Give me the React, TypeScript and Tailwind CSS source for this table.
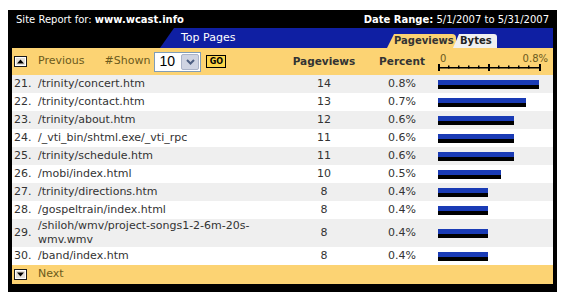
import React from 'react'

type Row = {n: number; path: string; views: number; pct: number}

const rows: Row[] = [
  {n: 21, path: '/trinity/concert.htm', views: 14, pct: 0.8},
  {n: 22, path: '/trinity/contact.htm', views: 13, pct: 0.7},
  {n: 23, path: '/trinity/about.htm', views: 12, pct: 0.6},
  {n: 24, path: '/_vti_bin/shtml.exe/_vti_rpc', views: 11, pct: 0.6},
  {n: 25, path: '/trinity/schedule.htm', views: 11, pct: 0.6},
  {n: 26, path: '/mobi/index.html', views: 10, pct: 0.5},
  {n: 27, path: '/trinity/directions.htm', views: 8, pct: 0.4},
  {n: 28, path: '/gospeltrain/index.html', views: 8, pct: 0.4},
  {n: 29, path: '/shiloh/wmv/project-songs1-2-6m-20s-wmv.wmv', views: 8, pct: 0.4},
  {n: 30, path: '/band/index.htm', views: 8, pct: 0.4},
]

const ArrowBox = ({up}: {up: boolean}) => (
  <svg width="13" height="11" viewBox="0 0 13 11">
    <rect x="0.5" y="0.5" width="12" height="10" fill="#e4e0d8" stroke="#1a1a1a" />
    <rect x="1.5" y="1.5" width="10" height="8" fill="none" stroke="#ffffff" />
    {up ? (
      <polygon points="3,7.5 10,7.5 6.5,3.5" fill="#000" />
    ) : (
      <polygon points="3,3.5 10,3.5 6.5,7.5" fill="#000" />
    )}
  </svg>
)

const Ruler = () => {
  const ticks = [10, 20, 30, 40, 60, 70, 80, 90]
  return (
    <svg width="103" height="7" viewBox="0 0 103 7">
      <rect x="0" y="3" width="103" height="1.5" fill="#000" />
      <rect x="0" y="0" width="2" height="7" fill="#000" />
      <rect x="50" y="0" width="2" height="7" fill="#000" />
      <rect x="101" y="0" width="2" height="7" fill="#000" />
      {ticks.map(t => (
        <rect key={t} x={t} y="1.5" width="1.5" height="3" fill="#000" />
      ))}
    </svg>
  )
}

export default function App() {
  return (
    <div className="w-[565px] h-[301px] bg-white pt-[10px] pl-[8px] font-['DejaVu_Sans',Verdana,sans-serif]">
      <div className="w-[549px] bg-black px-[4px] pb-[8px]">
        {/* title bar */}
        <div className="h-[18px] flex items-center justify-between px-[4px] text-[10px] text-white">
          <span>
            Site Report for: <b>www.wcast.info</b>
          </span>
          <span>
            <b>Date Range:</b> 5/1/2007 to 5/31/2007
          </span>
        </div>

        {/* tab bar */}
        <div className="h-[20px] flex">
          <div className="ml-[148px] flex-1 flex items-end bg-[#0f1fa3] [clip-path:polygon(14px_0,100%_0,100%_100%,0_100%)] rounded-tl-[6px]">
            <span className="self-center ml-[21px] text-[11px] text-white">Top Pages</span>
            <div className="ml-auto mr-[56px] flex items-end">
              <div className="h-[14px] w-[69px] pl-[7px] bg-[#fcd373] rounded-tr-[4px] text-[10px] font-bold text-[#333] leading-[14px] [clip-path:polygon(7px_0,100%_0,100%_100%,0_100%)]">
                Pageviews
              </div>
              <div className="relative -ml-[3px] h-[14px] w-[44px] pl-[7px] bg-[#f0f0f0] rounded-tr-[3px] text-[10px] font-bold text-[#222] leading-[14px] [clip-path:polygon(6px_0,100%_0,100%_100%,0_100%)]">
                Bytes
              </div>
            </div>
          </div>
        </div>

        {/* column header */}
        <div className="h-[27px] flex items-center bg-[#fcd373] text-[11px] text-[#6b5a1c]">
          <div className="w-[270px] flex items-center pl-[2px]">
            <ArrowBox up />
            <span className="ml-[11px]">Previous</span>
            <span className="ml-[20px]">#Shown</span>
            <div className="ml-[4px] w-[47px] h-[20px] bg-white border border-[#7f9db9] flex items-center">
              <span className="pl-[4px] w-[19px] text-[14px] text-black font-['Liberation_Sans',Arial,sans-serif]">10</span>
              <div className="ml-auto mr-[1px] w-[18px] h-[16px] bg-[#cfd4e2] border border-[#aab3c8] rounded-[2px] flex items-center justify-center">
                <svg width="9" height="6" viewBox="0 0 9 6">
                  <polyline points="1,1 4.5,4.5 8,1" fill="none" stroke="#4d5f82" strokeWidth="2" />
                </svg>
              </div>
            </div>
            <div className="ml-[5px] w-[20px] h-[13px] border border-black bg-[#fdd54a] flex items-center justify-center text-[8px] font-bold text-black leading-none">
              GO
            </div>
          </div>
          <div className="w-[84px] text-center font-bold text-[#333] text-[10.5px]">Pageviews</div>
          <div className="w-[72px] text-center font-bold text-[#333] text-[10.5px]">Percent</div>
          <div className="w-[113px] flex flex-col pt-[2px]">
            <div className="flex justify-between text-[10px] leading-[10px] pl-[2px] pr-[3px]">
              <span>0</span>
              <span>0.8%</span>
            </div>
            <Ruler />
          </div>
        </div>

        {/* rows */}
        {rows.map((r, i) => (
          <div
            key={r.n}
            className={`flex items-center text-[11px] text-[#333] ${i % 2 === 0 ? 'bg-[#efefef]' : 'bg-white'} ${r.n === 29 ? 'h-[28px]' : 'h-[18px]'}`}
          >
            <div className="w-[26px] pl-[2px]">{r.n}.</div>
            <div className="w-[244px] pr-[14px] leading-[14px]">{r.path}</div>
            <div className="w-[84px] text-center">{r.views}</div>
            <div className="w-[72px] text-center">{r.pct.toFixed(1)}%</div>
            <div className="flex flex-col" style={{width: Math.round(r.pct * 126)}}>
              <div className="h-[5px] bg-[#1a3bb5]" />
              <div className="h-[4px] bg-black" />
            </div>
          </div>
        ))}

        {/* footer */}
        <div className="h-[19px] flex items-center bg-[#fcd373] pl-[2px] text-[11px] text-[#6b5a1c]">
          <ArrowBox up={false} />
          <span className="ml-[11px]">Next</span>
        </div>
      </div>
    </div>
  )
}
